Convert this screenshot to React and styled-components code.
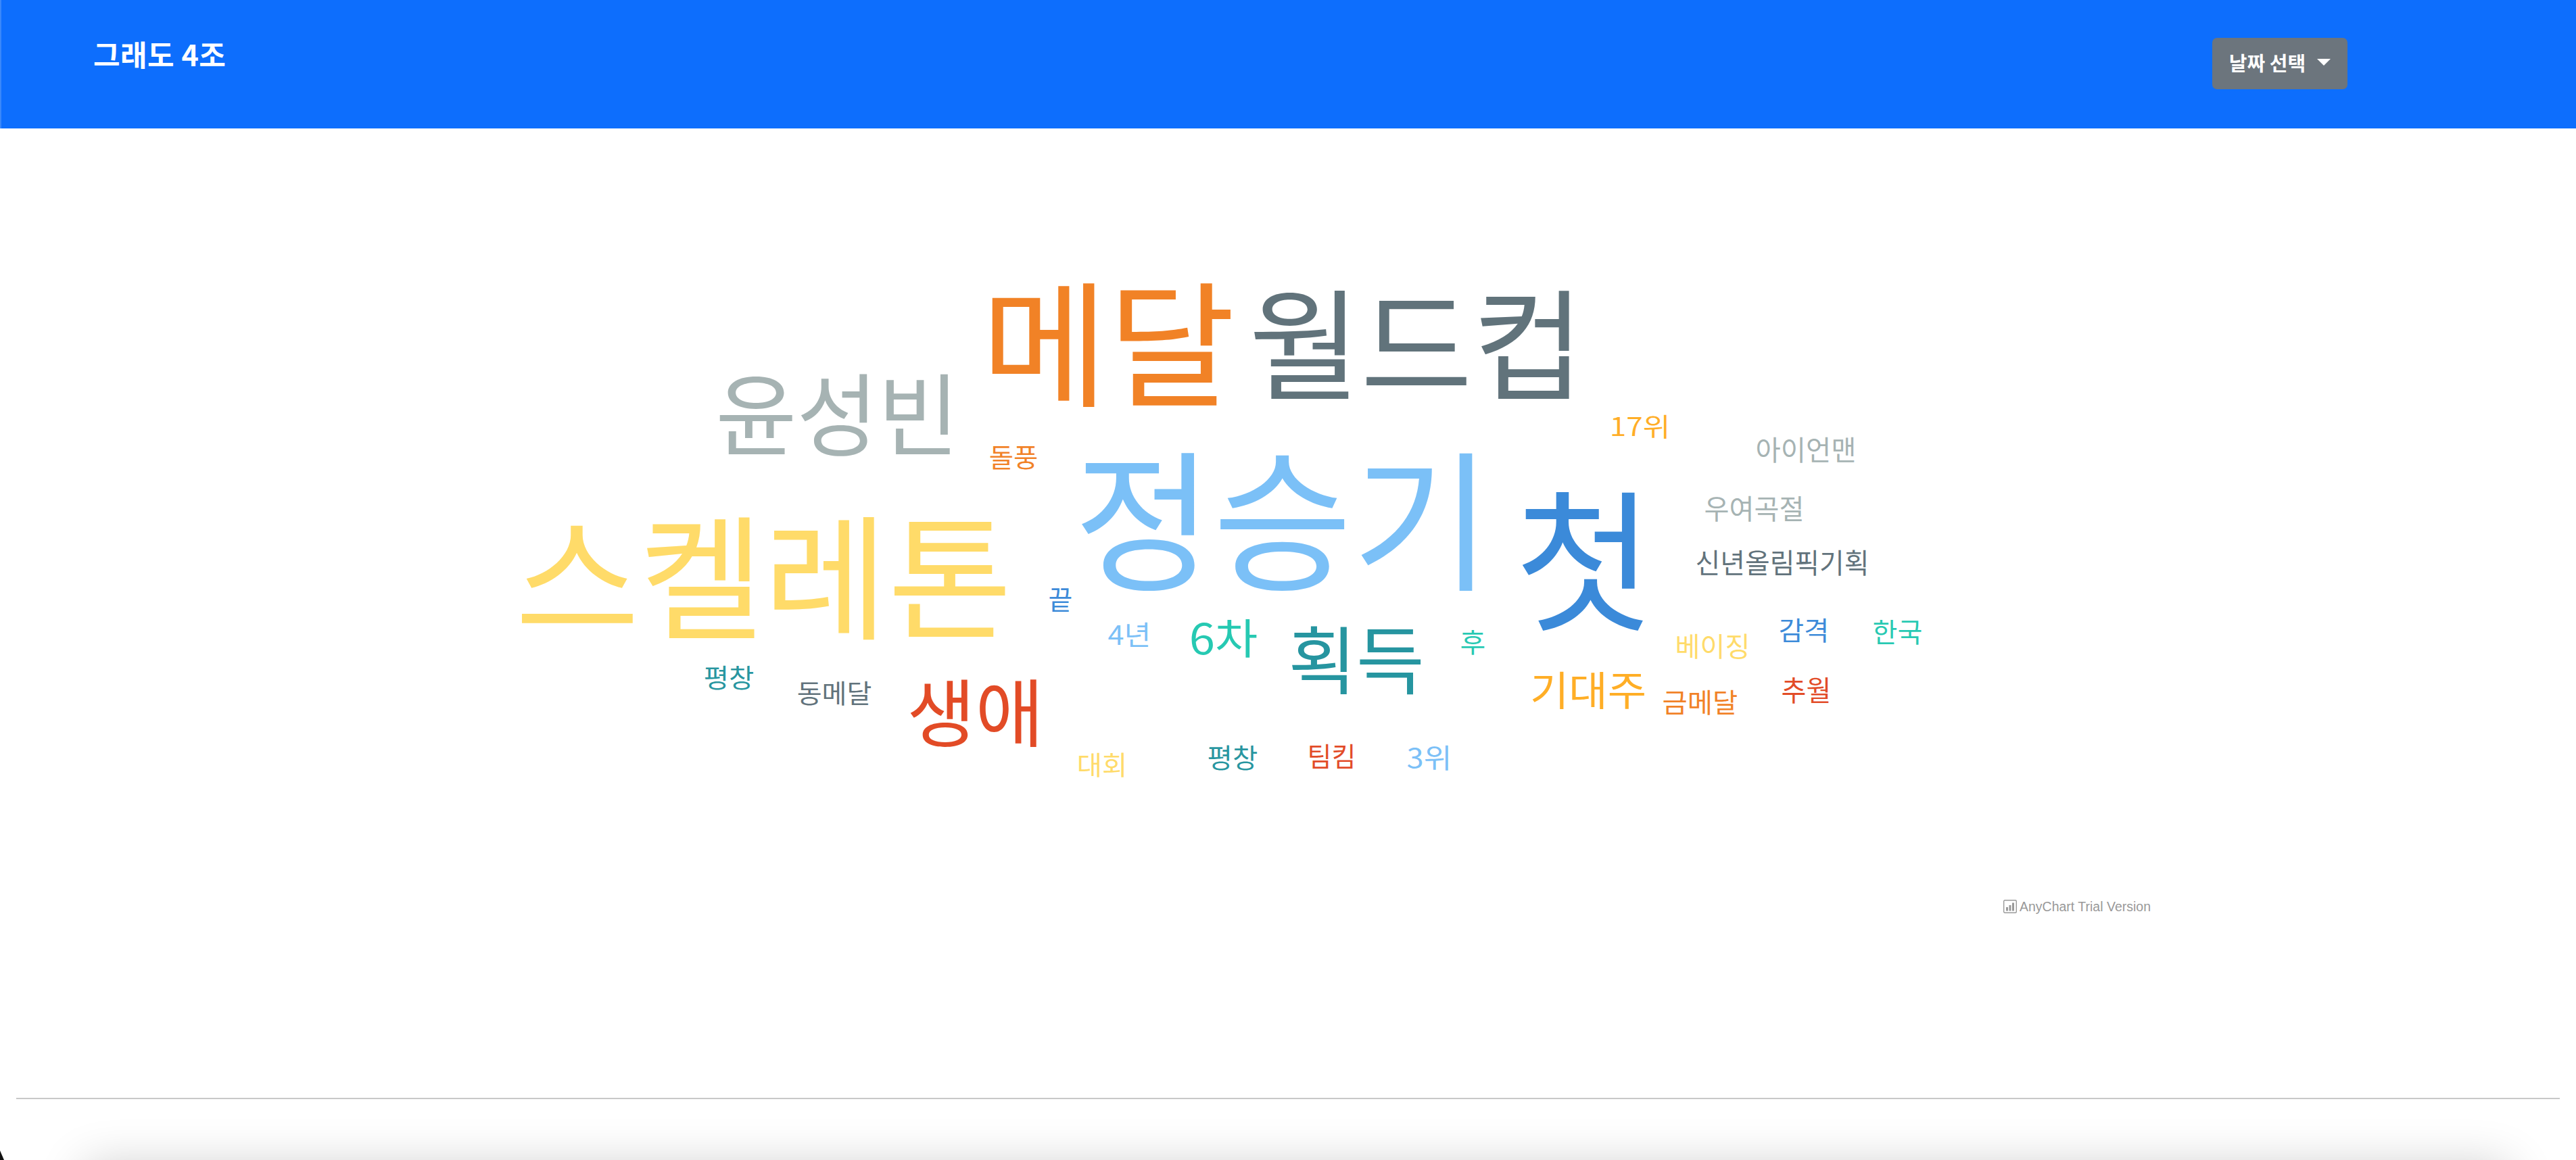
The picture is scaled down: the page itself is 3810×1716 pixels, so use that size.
import React from "react";
import styled, { createGlobalStyle } from "styled-components";

const GlobalStyle = createGlobalStyle`
  html, body {
    margin: 0;
    padding: 0;
    background: #fff;
  }
`;

const fontStack = `"Noto Sans CJK KR", "Liberation Sans", sans-serif`;

// anychart default palette
const lightBlue = "#64b5f6";
const blue = "#1976d2";
const orange = "#ef6c00";
const yellow = "#ffd54f";
const slate = "#455a64";
const gray = "#96a6a6";
const red = "#dd2c00";
const teal = "#00838f";
const mint = "#00bfa5";
const amber = "#ffa000";

// left, right, top, bottom of the ink, in page pixels
// x0/x1 of a few big words are pushed out where the last glyph has wide bearings
const words = [
  { text: "메달", x0: 1458, x1: 1820, top: 416, bottom: 603, color: orange },
  { text: "월드컵", x0: 1853, x1: 2337, top: 427, bottom: 593, color: slate },
  { text: "윤성빈", x0: 1063, x1: 1414, top: 552, bottom: 676, color: gray },
  { text: "돌풍", x0: 1464, x1: 1534, top: 660, bottom: 696, color: orange },
  { text: "17위", x0: 2382, x1: 2469, top: 615, bottom: 650, color: amber },
  { text: "아이언맨", x0: 2598, x1: 2744, top: 648, bottom: 686, color: gray },
  { text: "정승기", x0: 1596, x1: 2198, top: 667, bottom: 875, color: lightBlue },
  { text: "첫", x0: 2248, x1: 2438, top: 725, bottom: 935, color: blue },
  { text: "우여곡절", x0: 2522, x1: 2667, top: 735, bottom: 773, color: gray },
  { text: "스켈레톤", x0: 769, x1: 1490, top: 762, bottom: 947, color: yellow },
  { text: "신년올림픽기획", x0: 2509, x1: 2763, top: 815, bottom: 853, color: slate },
  { text: "끝", x0: 1552, x1: 1585, top: 870, bottom: 907, color: blue },
  { text: "4년", x0: 1640, x1: 1701, top: 922, bottom: 959, color: lightBlue },
  { text: "6차", x0: 1761, x1: 1858, top: 917, bottom: 975, color: mint },
  { text: "획득", x0: 1909, x1: 2103, top: 926, bottom: 1028, color: teal },
  { text: "후", x0: 2161, x1: 2196, top: 933, bottom: 970, color: mint },
  { text: "감격", x0: 2632, x1: 2704, top: 916, bottom: 952, color: blue },
  { text: "한국", x0: 2771, x1: 2842, top: 918, bottom: 955, color: mint },
  { text: "베이징", x0: 2479, x1: 2587, top: 939, bottom: 976, color: yellow },
  { text: "평창", x0: 1042, x1: 1114, top: 986, bottom: 1022, color: teal },
  { text: "동메달", x0: 1180, x1: 1288, top: 1009, bottom: 1045, color: slate },
  { text: "생애", x0: 1345, x1: 1540, top: 1005, bottom: 1106, color: red },
  { text: "기대주", x0: 2265, x1: 2433, top: 995, bottom: 1051, color: amber },
  { text: "금메달", x0: 2460, x1: 2569, top: 1022, bottom: 1059, color: orange },
  { text: "추월", x0: 2636, x1: 2707, top: 1003, bottom: 1042, color: red },
  { text: "대회", x0: 1594, x1: 1666, top: 1115, bottom: 1151, color: yellow },
  { text: "평창", x0: 1787, x1: 1859, top: 1104, bottom: 1141, color: teal },
  { text: "팀킴", x0: 1935, x1: 2004, top: 1102, bottom: 1139, color: red },
  { text: "3위", x0: 2082, x1: 2146, top: 1104, bottom: 1141, color: lightBlue },
];

const NAV_HEIGHT = 190;

const App = () => {
  return (
    <Page>
      <GlobalStyle />
      <Navbar>
        <Brand>그래도 4조</Brand>
        <DateButton type="button">
          날짜 선택
          <Caret />
        </DateButton>
      </Navbar>

      <ChartArea>
        <Cloud viewBox={`0 ${NAV_HEIGHT} 3810 1434`}>
          {words.map((word, index) => {
            const size = (word.bottom - word.top) / 0.93;
            // glyphs have side bearings, so the run is a bit wider than its ink
            const bearing = size * 0.035;
            return (
              <Word
                key={index}
                x={word.x0 - bearing}
                y={word.bottom - size * 0.075 - 2}
                textLength={word.x1 - word.x0 + bearing * 2}
                lengthAdjust="spacingAndGlyphs"
                $size={size}
                $color={word.color}
              >
                {word.text}
              </Word>
            );
          })}
        </Cloud>
        <Credit>
          <svg width="20" height="20" viewBox="0 0 20 20" fill="none">
            <rect x="0.7" y="0.7" width="18.6" height="18.6" rx="1.5" stroke="#999" strokeWidth="1.4" />
            <rect x="4" y="11" width="3" height="5.5" fill="#999" />
            <rect x="8.5" y="8" width="3" height="8.5" fill="#999" />
            <rect x="13" y="4.5" width="3" height="12" fill="#999" />
          </svg>
          AnyChart Trial Version
        </Credit>
      </ChartArea>

      <Divider />
      <ShadowCard />
      <WindowCorner />
    </Page>
  );
};

const Page = styled.div`
  position: relative;
  width: 3810px;
  height: 1716px;
  overflow: hidden;
  background: #fff;
  font-family: ${fontStack};
`;

const Navbar = styled.nav`
  height: ${NAV_HEIGHT}px;
  box-sizing: border-box;
  display: flex;
  justify-content: space-between;
  align-items: flex-start;
  padding: 56px 338px 0 136px;
  background: #0d6efd;
  border-left: 2px solid #3a88fa;
`;

const Brand = styled.div`
  margin-top: -2px;
  color: #fff;
  font-size: 43px;
  font-weight: 700;
  line-height: 50px;
  letter-spacing: 0.5px;
`;

const DateButton = styled.button`
  width: 200px;
  height: 76px;
  display: flex;
  align-items: center;
  justify-content: center;
  gap: 17px;
  padding: 0 0 5px;
  border: none;
  border-radius: 7px;
  background: #6c757d;
  color: #fff;
  font-family: ${fontStack};
  font-size: 29px;
  font-weight: 700;
`;

const Caret = styled.span`
  width: 0;
  height: 0;
  border-top: 10px solid #fff;
  border-left: 10px solid transparent;
  border-right: 10px solid transparent;
`;

const ChartArea = styled.div`
  position: relative;
  height: 1434px;
`;

const Cloud = styled.svg`
  display: block;
  width: 3810px;
  height: 1434px;
`;

const Word = styled.text`
  font-family: ${fontStack};
  font-size: ${(p) => p.$size}px;
  font-weight: 400;
  fill: ${(p) => p.$color};
  fill-opacity: 0.85;
`;

const Credit = styled.div`
  position: absolute;
  left: 2963px;
  top: 1140px;
  display: flex;
  align-items: center;
  gap: 4px;
  color: #999;
  font-family: "Liberation Sans", sans-serif;
  font-size: 19.5px;
  line-height: 22px;
  white-space: nowrap;
`;

const Divider = styled.hr`
  margin: 0 24px;
  border: none;
  height: 2px;
  background: #c8c8c8;
`;

const ShadowCard = styled.div`
  margin: 98px 100px 0 125px;
  height: 200px;
  background: #fff;
  box-shadow: 0 0 70px rgba(0, 0, 0, 0.2);
`;

const WindowCorner = styled.div`
  position: absolute;
  left: 0;
  bottom: 0;
  width: 6px;
  height: 14px;
  background: #111;
  clip-path: polygon(0 0, 100% 100%, 0 100%);
`;

export default App;
